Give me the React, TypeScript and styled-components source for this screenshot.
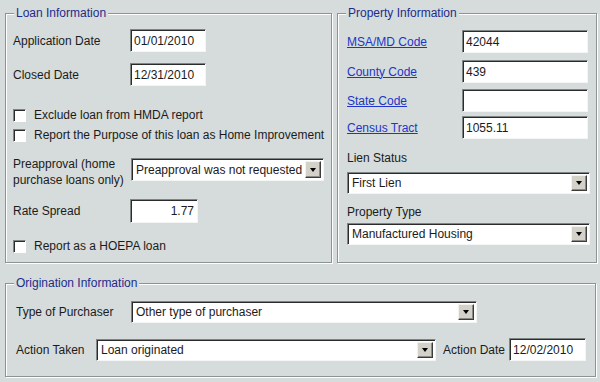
import React from 'react';
import styled, { createGlobalStyle } from 'styled-components';

const GlobalStyle = createGlobalStyle`
  html, body {
    margin: 0;
    padding: 0;
    background: #d5dcdb;
  }
  body {
    font-family: "Liberation Sans", Arial, sans-serif;
    font-size: 12px;
    color: #1b1b1b;
  }
`;

const Page = styled.div`
  width: 600px;
  height: 382px;
  box-sizing: border-box;
  padding: 13px 0 0 5px;
  display: flex;
  flex-direction: column;
  gap: 20px;
`;

const TopRow = styled.div`
  display: flex;
  gap: 5px;
`;

// etched group box
const Frame = styled.section<{ $w: number; $h: number; $pad: string }>`
  position: relative;
  box-sizing: border-box;
  width: ${p => p.$w}px;
  height: ${p => p.$h}px;
  padding: ${p => p.$pad};
  border: 1px solid #8b9393;
  box-shadow: inset 1px 1px 0 #fff, 1px 1px 0 #fff;
  display: flex;
  flex-direction: column;
`;

const Title = styled.h2`
  position: absolute;
  top: -8px;
  left: 8px;
  margin: 0;
  padding: 0 2px;
  font-size: 12px;
  font-weight: normal;
  line-height: 14px;
  color: #1d2b8c;
  background: #d5dcdb;
`;

const Row = styled.div<{ $mt?: number; $align?: string }>`
  display: flex;
  align-items: ${p => p.$align ?? 'center'};
  margin-top: ${p => p.$mt ?? 0}px;
`;

const Label = styled.span<{ $w?: number }>`
  flex: none;
  width: ${p => (p.$w ? `${p.$w}px` : 'auto')};
  line-height: 16px;
  white-space: nowrap;
`;

const LinkLabel = styled.a<{ $w: number }>`
  flex: none;
  width: ${p => p.$w}px;
  line-height: 16px;
  color: #2235c8;
  text-decoration: underline;
  cursor: pointer;
  span {
    text-decoration: underline;
  }
`;

const TextBox = styled.input<{ $w: number; $h?: number; $right?: boolean }>`
  box-sizing: border-box;
  width: ${p => p.$w}px;
  height: ${p => p.$h ?? 23}px;
  margin: 0;
  padding: 0 3px;
  font: 12px "Liberation Sans", Arial, sans-serif;
  color: #1b1b1b;
  background: #fff;
  border: 1px solid;
  border-color: #7e8585 #f4f6f6 #f4f6f6 #7e8585;
  box-shadow: inset 1px 1px 0 #2b2b2b;
  text-align: ${p => (p.$right ? 'right' : 'left')};
  outline: none;
`;

const Select = styled.div<{ $w: number; $h?: number; $mt?: number }>`
  box-sizing: border-box;
  width: ${p => p.$w}px;
  height: ${p => p.$h ?? 22}px;
  margin-top: ${p => p.$mt ?? 0}px;
  padding: 2px 2px 2px 4px;
  display: flex;
  align-items: center;
  background: #fff;
  border: 1px solid;
  border-color: #7e8585 #f4f6f6 #f4f6f6 #7e8585;
  box-shadow: inset 1px 1px 0 #2b2b2b;
`;

const SelectText = styled.span`
  flex: 1;
  white-space: nowrap;
  overflow: hidden;
`;

const DropButton = styled.span`
  flex: none;
  box-sizing: border-box;
  width: 16px;
  align-self: stretch;
  display: flex;
  align-items: center;
  justify-content: center;
  background: #d4d1c9;
  border: 1px solid;
  border-color: #f2f2ee #3c3c3c #3c3c3c #f2f2ee;
  box-shadow: inset -1px -1px 0 #8a8a86;
`;

const Arrow = styled.span`
  width: 0;
  height: 0;
  border-left: 3.5px solid transparent;
  border-right: 3.5px solid transparent;
  border-top: 4px solid #000;
`;

const CheckRow = styled.label<{ $mt: number }>`
  display: flex;
  align-items: center;
  height: 16px;
  margin-top: ${p => p.$mt}px;
  white-space: nowrap;
`;

const Box = styled.span`
  flex: none;
  box-sizing: border-box;
  width: 13px;
  height: 13px;
  margin-right: 8px;
  background: #fff;
  border: 1px solid;
  border-color: #7e8585 #fff #fff #7e8585;
  box-shadow: inset 1px 1px 0 #2b2b2b;
`;

const Combo: React.FC<{ w: number; h?: number; mt?: number; value: string }> = ({ w, h, mt, value }) => (
  <Select $w={w} $h={h} $mt={mt}>
    <SelectText>{value}</SelectText>
    <DropButton>
      <Arrow />
    </DropButton>
  </Select>
);

const App: React.FC = () => {
  return (
    <>
      <GlobalStyle />
      <Page>
        <TopRow>
          <Frame $w={327} $h={250} $pad="15px 7px 0 7px">
            <Title>Loan Information</Title>
            <Row>
              <Label $w={117}>Application Date</Label>
              <TextBox $w={76} defaultValue="01/01/2010" readOnly />
            </Row>
            <Row $mt={11}>
              <Label $w={117}>Closed Date</Label>
              <TextBox $w={76} defaultValue="12/31/2010" readOnly />
            </Row>
            <CheckRow $mt={21}>
              <Box />
              Exclude loan from HMDA report
            </CheckRow>
            <CheckRow $mt={4}>
              <Box />
              Report the Purpose of this loan as Home Improvement
            </CheckRow>
            <Row $mt={13} $align="flex-start">
              <Label $w={118}>
                Preapproval (home
                <br />
                purchase loans only)
              </Label>
              <Combo w={195} h={23} mt={2} value="Preapproval was not requested" />
            </Row>
            <Row $mt={11}>
              <Label $w={117}>Rate Spread</Label>
              <TextBox $w={68} $h={24} $right defaultValue="1.77" readOnly />
            </Row>
            <CheckRow $mt={15}>
              <Box />
              Report as a HOEPA loan
            </CheckRow>
          </Frame>

          <Frame $w={260} $h={250} $pad="16px 8px 0 9px">
            <Title>Property Information</Title>
            <Row>
              <LinkLabel $w={115}>MSA/MD Code</LinkLabel>
              <TextBox $w={126} defaultValue="42044" readOnly />
            </Row>
            <Row $mt={7}>
              <LinkLabel $w={115}>County Code</LinkLabel>
              <TextBox $w={126} defaultValue="439" readOnly />
            </Row>
            <Row $mt={6}>
              <LinkLabel $w={115}>State Code</LinkLabel>
              <TextBox $w={126} defaultValue="" readOnly />
            </Row>
            <Row $mt={4}>
              <LinkLabel $w={115}>Census Tract</LinkLabel>
              <TextBox $w={126} defaultValue="1055.11" readOnly />
            </Row>
            <Row $mt={11}>
              <Label>Lien Status</Label>
            </Row>
            <Combo w={243} mt={6} value="First Lien" />
            <Row $mt={10}>
              <Label>Property Type</Label>
            </Row>
            <Combo w={243} mt={3} value="Manufactured Housing" />
          </Frame>
        </TopRow>

        <Frame $w={591} $h={94} $pad="17px 8px 0 10px">
          <Title>Origination Information</Title>
          <Row>
            <Label $w={115}>Type of Purchaser</Label>
            <Combo w={346} value="Other type of purchaser" />
          </Row>
          <Row $mt={15}>
            <Label $w={80}>Action Taken</Label>
            <Combo w={340} value="Loan originated" />
            <Label style={{ marginLeft: 7, marginRight: 4 }}>Action Date</Label>
            <TextBox $w={77} defaultValue="12/02/2010" readOnly />
          </Row>
        </Frame>
      </Page>
    </>
  );
};

export default App;
